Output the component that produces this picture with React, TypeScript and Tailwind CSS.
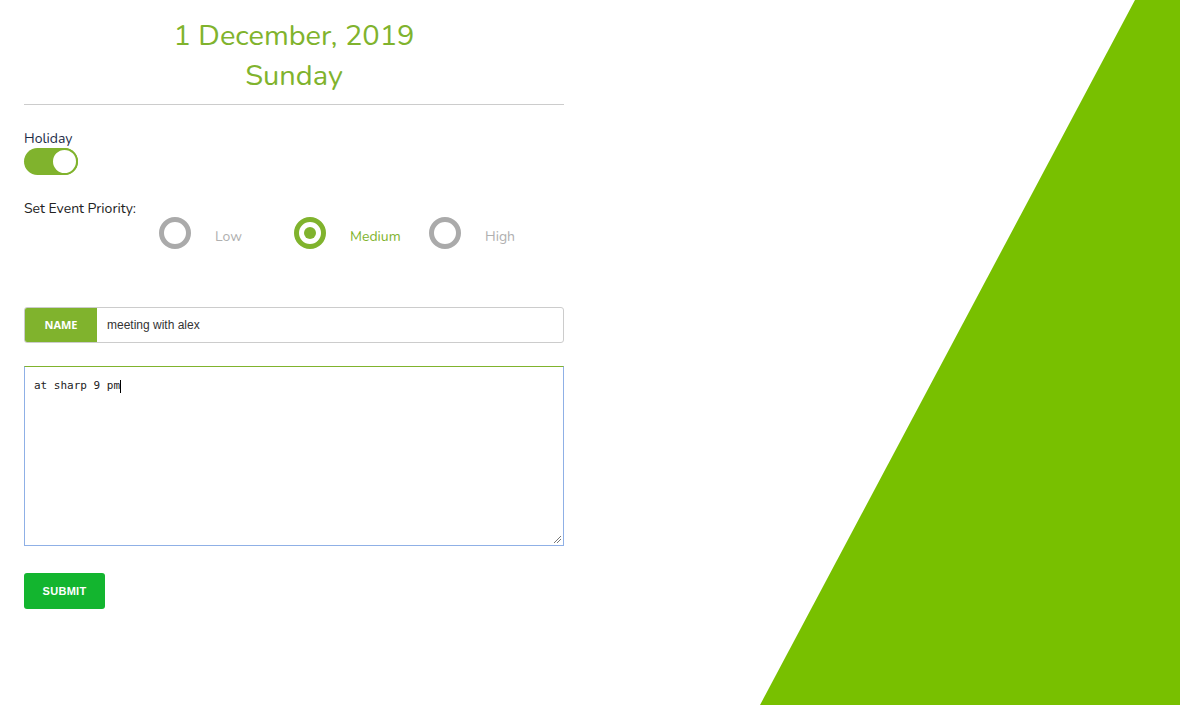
import React from "react";

const font = { fontFamily: "Nunito, Lato, 'Noto Sans', sans-serif" };

function Radio({ label, checked }: { label: string; checked?: boolean }) {
  return (
    <div className="flex items-center w-[135px]">
      <div
        className={
          "w-[32px] h-[32px] rounded-full border-[5px] flex items-center justify-center box-border " +
          (checked ? "border-[#80b32d]" : "border-[#aaaaaa]")
        }
      >
        {checked && <div className="w-[12px] h-[12px] rounded-full bg-[#80b32d]" />}
      </div>
      <span
        className={
          "ml-[24px] text-[14px] mt-[7px] " + (checked ? "text-[#80b32d]" : "text-[#b0b0b0]")
        }
      >
        {label}
      </span>
    </div>
  );
}

export default function App() {
  return (
    <div className="relative w-[1180px] h-[705px] bg-white overflow-hidden" style={font}>
      <svg className="absolute top-0 left-0" width="1180" height="705" viewBox="0 0 1180 705">
        <polygon points="1135,0 1180,0 1180,705 760,705" fill="#78c000" />
      </svg>
      <div className="relative w-[540px] ml-[24px] flex flex-col">
        <div className="text-center text-[#80b32d] text-[29px] leading-[40px] pt-[16px] pb-[8px] border-b border-[#cccccc]">
          <div>1 December, 2019</div>
          <div>Sunday</div>
        </div>
        <div className="mt-[25px] text-[14px] leading-[18px] text-[#1c2b46]">Holiday</div>
        <div className="mt-0 w-[54px] h-[27px] rounded-full bg-[#80b32d] flex items-center justify-end">
          <div className="w-[27px] h-[27px] rounded-full bg-white border-2 border-[#80b32d] box-border" />
        </div>
        <div className="mt-[25px] text-[14px] leading-[18px] text-[#222]">Set Event Priority:</div>
        <div className="flex ml-[135px] -mt-[1px]">
          <Radio label="Low" />
          <Radio label="Medium" checked />
          <Radio label="High" />
        </div>
        <div className="mt-[58px] flex h-[36px] border border-[#cccccc] rounded-[3px] overflow-hidden">
          <div
            className="w-[72px] bg-[#80b32d] text-white text-[11px] font-bold flex items-center justify-center"
            style={{ fontFamily: "'Open Sans', Lato, sans-serif" }}
          >
            NAME
          </div>
          <div
            className="flex items-center pl-[10px] text-[12px] text-[#333]"
            style={{ fontFamily: "'Liberation Sans', Arial, sans-serif" }}
          >
            meeting with alex
          </div>
        </div>
        <div className="relative mt-[23px] h-[180px] border border-[#8fb0e6] border-t-[#80b32d] box-border">
          <div
            className="pl-[9px] pt-[11px] text-[11px] text-[#222] flex items-center"
            style={{ fontFamily: "'DejaVu Sans Mono', monospace" }}
          >
            <span>at sharp 9 pm</span>
            <span className="inline-block w-[1px] h-[13px] bg-black" />
          </div>
          <svg className="absolute right-[1px] bottom-[1px]" width="10" height="10" viewBox="0 0 10 10">
            <line x1="9" y1="2" x2="2" y2="9" stroke="#777" strokeWidth="1" />
            <line x1="9" y1="5" x2="5" y2="9" stroke="#777" strokeWidth="1" />
          </svg>
        </div>
        <div className="mt-[27px]">
          <button
            className="w-[81px] h-[36px] rounded-[3px] bg-[#13b52f] text-white text-[11px] font-bold tracking-wide"
            style={{ fontFamily: "'Liberation Sans', Arial, sans-serif" }}
          >
            SUBMIT
          </button>
        </div>
      </div>
    </div>
  );
}
